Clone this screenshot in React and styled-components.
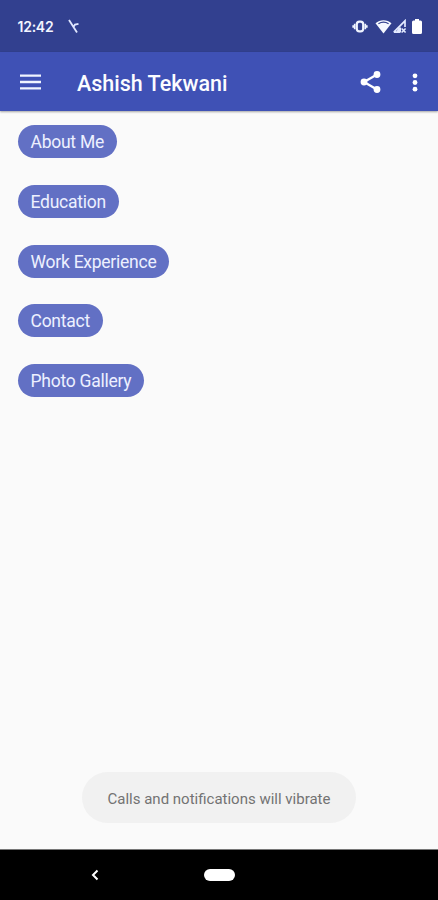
import React from 'react'
import styled, { createGlobalStyle } from 'styled-components'

const GlobalStyle = createGlobalStyle`
  body {
    margin: 0;
    background-color: #fafafa;
    font-family: Roboto, sans-serif;
  }
`

const Screen = styled.div`
  display: flex;
  flex-direction: column;
  width: 438px;
  height: 900px;
  overflow: hidden;
  background-color: #fafafa;
`

const StatusBar = styled.header`
  display: flex;
  align-items: center;
  flex-shrink: 0;
  box-sizing: border-box;
  height: 52px;
  padding: 1px 16px 0 17.5px;
  background-color: #32408f;
`

const Clock = styled.span`
  width: 50px;
  font-family: Inter, Roboto, sans-serif;
  font-size: 14px;
  font-weight: 600;
  letter-spacing: -0.25px;
  color: #f3f5ff;
`

const StatusIcons = styled.div`
  display: flex;
  align-items: center;
  margin-left: auto;
`

const Icon = styled.svg`
  display: block;
  flex-shrink: 0;
  margin-left: ${({ $gap }) => $gap || 0}px;
`

const AppBar = styled.div`
  display: flex;
  align-items: center;
  flex-shrink: 0;
  box-sizing: border-box;
  height: 59px;
  padding: 1px 20.5px 0 20px;
  background-color: #3f51b5;
  box-shadow: 0 1px 2px rgba(0, 0, 0, 0.35);
`

const Title = styled.h1`
  flex: 1;
  margin: 3px 0 0 36px;
  font-size: 21.5px;
  font-weight: 500;
  line-height: 28px;
  color: #fbfcff;
`

const IconButton = styled.button`
  display: block;
  margin: 0 0 0 ${({ $gap }) => $gap || 0}px;
  padding: 0;
  border: none;
  background: none;
`

const Content = styled.main`
  display: flex;
  flex: 1;
  flex-direction: column;
  align-items: flex-start;
  gap: 26.7px;
  padding: 14.3px 17.5px 0;
`

const Chip = styled.button`
  flex-shrink: 0;
  height: 33px;
  padding: 1px 13px 0;
  border: none;
  border-radius: 17px;
  font-family: inherit;
  font-size: 17.5px;
  letter-spacing: -0.25px;
  line-height: 32px;
  white-space: nowrap;
  color: #edf0ff;
  background-color: #6270c4;
`

const Toast = styled.div`
  box-sizing: border-box;
  align-self: center;
  flex-shrink: 0;
  width: 274px;
  height: 51px;
  margin-bottom: 26.5px;
  border-radius: 26px;
  font-size: 15px;
  line-height: 54px;
  text-align: center;
  white-space: nowrap;
  color: #737373;
  background-color: #f1f1f1;
`

const NavBar = styled.nav`
  display: grid;
  grid-template-columns: 1fr 31px 1fr;
  align-items: center;
  flex-shrink: 0;
  box-sizing: border-box;
  height: 51px;
  border-top: 1px solid #777;
  background-color: #000;
`

const BackButton = styled(IconButton)`
  margin-left: 90px;
`

const HomePill = styled.div`
  height: 12px;
  border-radius: 6px;
  background-color: #fff;
`

const sections = [
  'About Me',
  'Education',
  'Work Experience',
  'Contact',
  'Photo Gallery',
]

const App = () => {
  return (
    <Screen>
      <GlobalStyle />
      <StatusBar>
        <Clock>12:42</Clock>
        <Icon width="13" height="15" viewBox="0 0 13 15">
          <path
            d="M1 1L9 13.5M5.5 8L7 5.5L10.5 4.8"
            fill="none"
            stroke="#e0e7ff"
            strokeWidth="1.8"
          />
        </Icon>
        <StatusIcons>
          <Icon width="16" height="13" viewBox="0 0 16 13">
            <rect x="4.8" y="1.6" width="6.4" height="9.8" rx="2.6" fill="none" stroke="#f0f4ff" strokeWidth="2.2" />
            <path d="M2.7 3.8v5.4M1.2 5.2v2.6M13.3 3.8v5.4M14.8 5.2v2.6" stroke="#f0f4ff" strokeWidth="1.7" />
          </Icon>
          <Icon $gap={7} width="17" height="15" viewBox="0 0 17 15">
            <path d="M.5 4.2C5 .1 12 .1 16.5 4.2L8.5 14.500z" fill="#f5f8ff" />
            <path d="M3.4 4.7C6.5 2.8 10.5 2.8 13.6 4.7" fill="none" stroke="#32408f" strokeWidth="1.3" />
          </Icon>
          <Icon width="15" height="15" viewBox="0 0 15 15">
            <path d="M1.800 13.200L13 1.800V8M1.800 13.200H8" fill="none" stroke="#e3eaff" strokeWidth="1.7" />
            <path d="M6.500 8.500h2.500v5H4z" fill="#e3eaff" />
            <path d="M9.600 9.500l4 4M13.600 9.500l-4 4" stroke="#e3eaff" strokeWidth="1.600" />
          </Icon>
          <Icon $gap={5} width="10" height="15" viewBox="0 0 10 15">
            <path d="M3 0h4v1.5h1.5Q10 1.5 10 3v10.5Q10 15 8.5 15h-7Q0 15 0 13.5V3Q0 1.5 1.5 1.5H3z" fill="#fff" />
          </Icon>
        </StatusIcons>
      </StatusBar>
      <AppBar>
        <IconButton aria-label="Menu">
          <Icon width="21" height="16" viewBox="0 0 21 16">
            <path d="M0 1.7h21M0 8h21M0 14.3h21" stroke="#f0f4ff" strokeWidth="2.3" />
          </Icon>
        </IconButton>
        <Title>Ashish Tekwani</Title>
        <IconButton aria-label="Share">
          <Icon width="21" height="24" viewBox="0 0 21 24">
            <path d="M17 4.5L4 12l13 7.5" fill="none" stroke="#fff" strokeWidth="2.3" />
            <circle cx="17" cy="4.5" r="3.4" fill="#fff" />
            <circle cx="4" cy="12" r="3.4" fill="#fff" />
            <circle cx="17" cy="19.5" r="3.4" fill="#fff" />
          </Icon>
        </IconButton>
        <IconButton aria-label="More options" $gap={31}>
          <Icon width="6" height="19" viewBox="0 0 6 19">
            <circle cx="3" cy="2.8" r="2.4" fill="#fff" />
            <circle cx="3" cy="9.5" r="2.4" fill="#fff" />
            <circle cx="3" cy="16.2" r="2.4" fill="#fff" />
          </Icon>
        </IconButton>
      </AppBar>
      <Content>
        {sections.map((section) => (
          <Chip key={section}>{section}</Chip>
        ))}
      </Content>
      <Toast>Calls and notifications will vibrate</Toast>
      <NavBar>
        <BackButton aria-label="Back">
          <Icon width="10" height="14" viewBox="0 0 10 14">
            <path d="M7.5 2.5L3 7l4.5 4.5" fill="none" stroke="#fff" strokeWidth="2" />
          </Icon>
        </BackButton>
        <HomePill />
      </NavBar>
    </Screen>
  )
}

export default App
